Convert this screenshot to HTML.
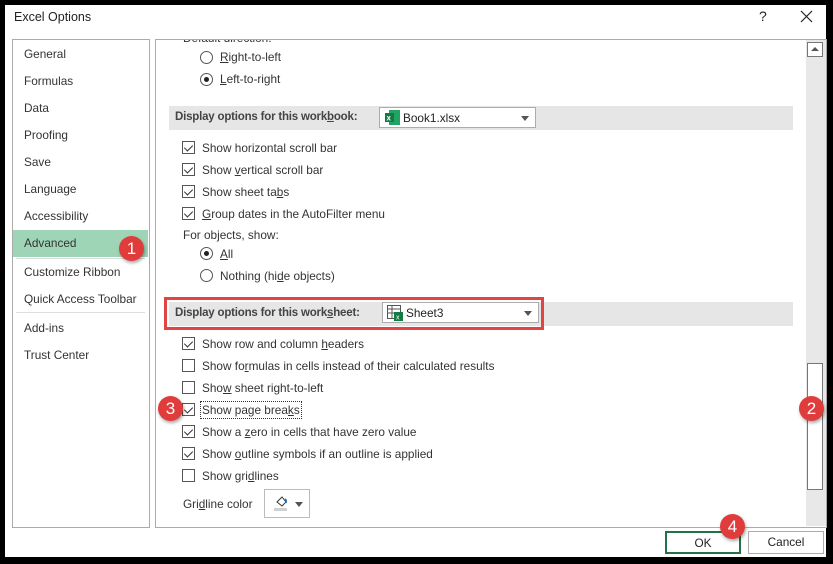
<!DOCTYPE html>
<html><head><style>
*{margin:0;padding:0;box-sizing:border-box}
body{width:833px;height:564px;background:#000;position:relative;overflow:hidden;font-family:"Liberation Sans",sans-serif;font-size:11.8px;color:#333}
.win{position:absolute;left:5px;top:5px;width:821px;height:552px;background:#fff}
.a{position:absolute;white-space:nowrap}
.lp{position:absolute;left:12px;top:39px;width:138px;height:489px;border:1px solid #ababab}
.rp{position:absolute;left:155px;top:39px;width:672px;height:489px;border:1px solid #ababab;overflow:hidden}
.li{position:absolute;left:24px}
.cb{position:absolute;width:13px;height:13px;border:1px solid #555;background:#fff}
.cb.c::after{content:"";position:absolute;left:3px;top:1px;width:4px;height:7px;border:solid #333;border-width:0 1.3px 1.3px 0;transform:rotate(45deg)}
.rd{position:absolute;width:13px;height:13px;border:1px solid #555;border-radius:50%;background:#fff}
.rd.c::after{content:"";position:absolute;left:3px;top:3px;width:5px;height:5px;border-radius:50%;background:#222}
.bar{position:absolute;left:169px;width:624px;height:24px;background:#e6e6e6}
.bar b{position:absolute;left:6px;top:5px;font-weight:bold;color:#444;font-size:11.5px;letter-spacing:-0.2px}
.dd{position:absolute;height:21px;border:1px solid #acacac;background:#fff}
.tri{position:absolute;right:6px;top:8px;width:0;height:0;border-left:4px solid transparent;border-right:4px solid transparent;border-top:5px solid #555}
.n{position:absolute;width:25px;height:25px;border-radius:50%;background:#e03c3c;color:#fff;font-size:17px;text-align:center;line-height:25px;box-shadow:1px 2px 3px rgba(0,0,0,.35)}
.btn{position:absolute;top:531px;height:23px;width:76px;border:1px solid #adadad;text-align:center;line-height:21px;color:#222;background:#fff}
</style></head><body>
<div class="win"></div>
<div class="a" style="left:14px;top:10px;font-size:12.5px;color:#222">Excel Options</div>
<div class="a" style="left:759px;top:8px;font-size:14px;color:#222">?</div>
<svg class="a" style="left:800px;top:10px" width="13" height="13"><path d="M1 1L12 12M12 1L1 12" stroke="#222" stroke-width="1.2"/></svg>

<div class="lp"></div>
<div class="a li" style="top:47px">General</div>
<div class="a li" style="top:74px">Formulas</div>
<div class="a li" style="top:101px">Data</div>
<div class="a li" style="top:128px">Proofing</div>
<div class="a li" style="top:155px">Save</div>
<div class="a li" style="top:182px">Language</div>
<div class="a li" style="top:209px">Accessibility</div>
<div class="a" style="left:13px;top:230px;width:135px;height:27px;background:#9fd5b7"></div>
<div class="a li" style="top:236px">Advanced</div>
<div class="a" style="left:16px;top:258px;width:129px;height:1px;background:#ddd"></div>
<div class="a li" style="top:265px">Customize Ribbon</div>
<div class="a li" style="top:292px">Quick Access Toolbar</div>
<div class="a" style="left:16px;top:312px;width:129px;height:1px;background:#ddd"></div>
<div class="a li" style="top:321px">Add-ins</div>
<div class="a li" style="top:348px">Trust Center</div>

<div class="rp"></div>
<div class="a" style="left:183px;top:31px;clip-path:inset(9px 0 0 0)">Default direction:</div>
<div class="rd" style="left:200px;top:51px"></div><div class="a" style="left:220px;top:50px"><u>R</u>ight-to-left</div>
<div class="rd c" style="left:200px;top:73px"></div><div class="a" style="left:220px;top:72px"><u>L</u>eft-to-right</div>

<div class="bar" style="top:106px"><b>Display options for this work<u>b</u>ook:</b></div>
<div class="dd" style="left:379px;top:107px;width:157px"><svg style="position:absolute;left:5px;top:2px" width="15" height="15"><rect x="4" y="0" width="11" height="15" fill="#21a366"/><rect x="0" y="3" width="9" height="9" fill="#107c41"/><text x="1.5" y="10.5" font-size="8" fill="#fff" font-weight="bold" font-family="Liberation Sans">x</text></svg><span class="a" style="left:23px;top:3px;color:#222">Book1.xlsx</span><div class="tri"></div></div>

<div class="cb c" style="left:182px;top:141px"></div><div class="a" style="left:202px;top:141px">Show horizontal scroll bar</div>
<div class="cb c" style="left:182px;top:163px"></div><div class="a" style="left:202px;top:163px">Show <u>v</u>ertical scroll bar</div>
<div class="cb c" style="left:182px;top:185px"></div><div class="a" style="left:202px;top:185px">Show sheet ta<u>b</u>s</div>
<div class="cb c" style="left:182px;top:207px"></div><div class="a" style="left:202px;top:207px"><u>G</u>roup dates in the AutoFilter menu</div>
<div class="a" style="left:183px;top:228px">For objects, show:</div>
<div class="rd c" style="left:200px;top:247px"></div><div class="a" style="left:220px;top:247px"><u>A</u>ll</div>
<div class="rd" style="left:200px;top:269px"></div><div class="a" style="left:220px;top:269px">Nothing (hi<u>d</u>e objects)</div>

<div class="bar" style="top:302px"><b>Display options for this work<u>s</u>heet:</b></div>
<div class="a" style="left:164px;top:297px;width:380px;height:33px;border:3px solid #e04444"></div>
<div class="dd" style="left:382px;top:302px;width:157px"><svg style="position:absolute;left:4px;top:2px" width="17" height="16"><rect x="0.5" y="0.5" width="13" height="13" fill="#fff" stroke="#555"/><path d="M0.5 4H13.5M0.5 8H13.5M5 0.5V13.5" stroke="#555"/><rect x="7" y="7" width="9" height="9" fill="#107c41"/><text x="9" y="14.5" font-size="7" fill="#fff" font-family="Liberation Sans">x</text></svg><span class="a" style="left:23px;top:3px;color:#222">Sheet3</span><div class="tri"></div></div>

<div class="cb c" style="left:182px;top:337px"></div><div class="a" style="left:202px;top:337px">Show row and column <u>h</u>eaders</div>
<div class="cb" style="left:182px;top:359px"></div><div class="a" style="left:202px;top:359px">Show fo<u>r</u>mulas in cells instead of their calculated results</div>
<div class="cb" style="left:182px;top:381px"></div><div class="a" style="left:202px;top:381px">Sho<u>w</u> sheet right-to-left</div>
<div class="cb c" style="left:182px;top:403px"></div><div class="a" style="left:200px;top:401px;border:1px dotted #333;padding:1px">Show page brea<u>k</u>s</div>
<div class="cb c" style="left:182px;top:425px"></div><div class="a" style="left:202px;top:425px">Show a <u>z</u>ero in cells that have zero value</div>
<div class="cb c" style="left:182px;top:447px"></div><div class="a" style="left:202px;top:447px">Show <u>o</u>utline symbols if an outline is applied</div>
<div class="cb" style="left:182px;top:469px"></div><div class="a" style="left:202px;top:469px">Show gri<u>d</u>lines</div>
<div class="a" style="left:183px;top:497px">Gri<u>d</u>line color</div>
<div class="a" style="left:264px;top:489px;width:46px;height:29px;border:1px solid #bbb;background:#fff">
<svg style="position:absolute;left:9px;top:4px" width="16" height="18"><path d="M3 8L8 3L12 8L8 12Z" fill="none" stroke="#333"/><path d="M11 5q2 1 1 4" stroke="#1e6fd0" stroke-width="1.5" fill="none"/><rect x="0" y="14" width="13" height="3" fill="#d0d0d0"/></svg><div class="tri" style="right:6px;top:12px"></div></div>

<div class="a" style="left:806px;top:40px;width:20px;height:486px;background:#e8e8e8"></div>
<div class="a" style="left:807px;top:42px;width:16px;height:15px;border:1px solid #777;background:#fff"><div class="tri" style="border-top:none;border-bottom:4px solid #555;right:3px;top:4px"></div></div>
<div class="a" style="left:807px;top:363px;width:16px;height:127px;border:1px solid #777;background:#fff"></div>

<div class="btn" style="left:665px;border:2px solid #217346">OK</div>
<div class="btn" style="left:748px">Cancel</div>

<div class="n" style="left:119px;top:236px">1</div>
<div class="n" style="left:799px;top:396px">2</div>
<div class="n" style="left:158px;top:396px">3</div>
<div class="n" style="left:720px;top:514px">4</div>
</body></html>
